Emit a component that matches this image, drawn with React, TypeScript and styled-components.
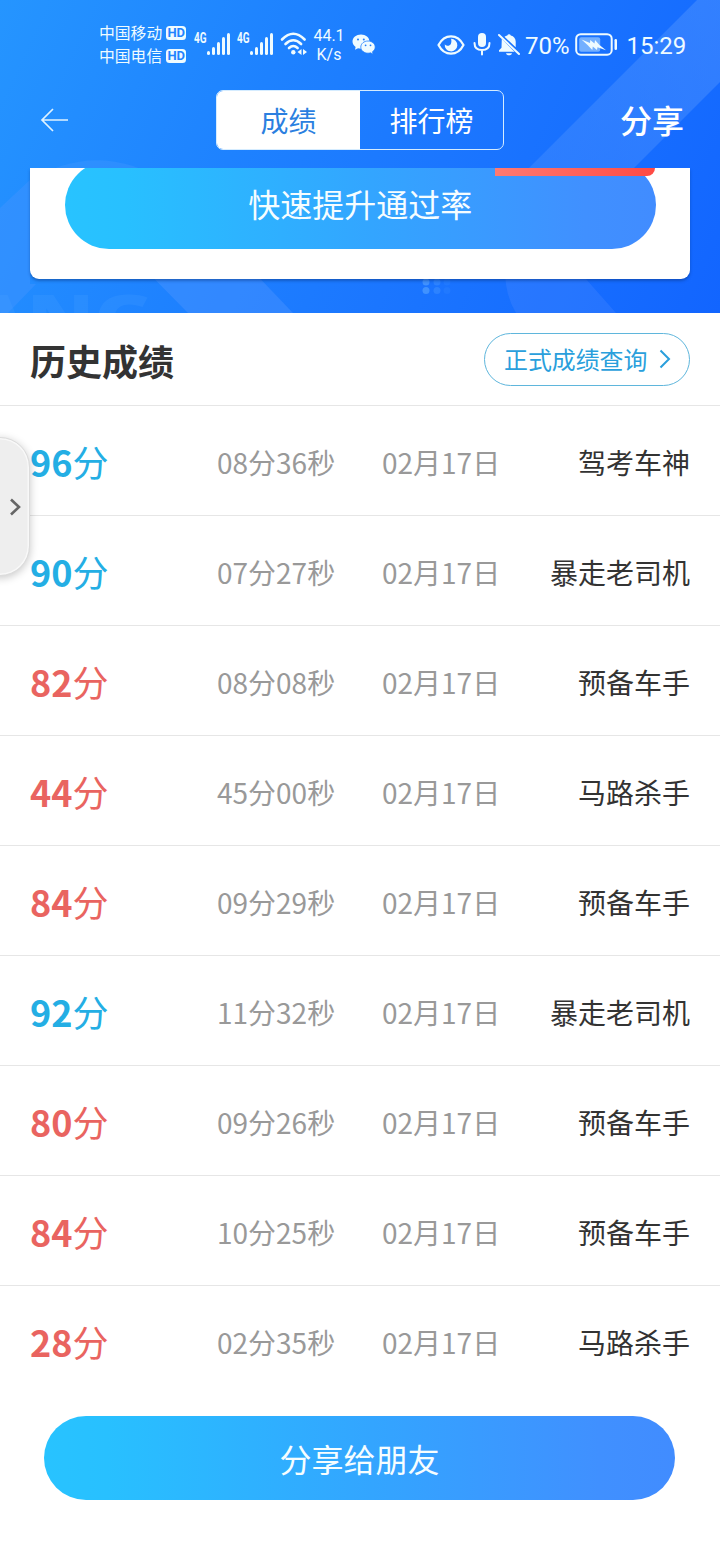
import React from "react";
import styled, { createGlobalStyle } from "styled-components";

const Global = createGlobalStyle`
  * { box-sizing: border-box; }
  body { margin: 0; background: #fff; font-family: "Noto Sans CJK SC", sans-serif; color: #333; }
  button { font: inherit; border: 0; padding: 0; background: none; }
`;

const ICE = "#effbff";

const Page = styled.main`
  position: relative;
  width: 720px;
  height: 1560px;
  overflow: hidden;
  background: #fff;
`;

const Hero = styled.header`
  position: relative;
  height: 313px;
  overflow: hidden;
  background: linear-gradient(115deg, #2595ff 0%, #1e82ff 35%, #1b76ff 60%, #1265ff 100%);
`;

const Backdrop = styled.svg`
  position: absolute;
  inset: 0;
`;

const HeroContent = styled.div`
  position: relative;
  display: flex;
  flex-direction: column;
`;

const StatusBar = styled.div`
  height: 80px;
  padding: 22px 30px 0 99px;
  display: flex;
  align-items: flex-start;
  color: ${ICE};
`;

const Carriers = styled.div`
  width: 88px;
  margin-top: -1px;
`;

const Carrier = styled.div`
  display: flex;
  align-items: center;
  gap: 4px;
  height: 23px;
  font-size: 15.8px;
  line-height: 22px;
  white-space: nowrap;
`;

const HdBadge = styled.span`
  flex: none;
  width: 20px;
  height: 14px;
  border-radius: 3.5px;
  background: ${ICE};
  color: #1f83ff;
  font: 700 13px/14px Roboto, sans-serif;
  text-align: center;
`;

const Glyph = styled.svg<{ $left: number; $top?: number }>`
  flex: none;
  margin-left: ${(p) => p.$left}px;
  margin-top: ${(p) => p.$top ?? 0}px;
`;

const Speed = styled.div`
  width: 32px;
  margin: 4px 0 0 5px;
  font: 400 16px/19px Roboto, sans-serif;
  text-align: center;
`;

const StatusText = styled.span<{ $left: number }>`
  margin: 10px 0 0 ${(p) => p.$left}px;
  font: 400 24px/29px Roboto, sans-serif;
  white-space: nowrap;
`;

const NavBar = styled.nav`
  height: 88px;
  padding: 10px 36px 0 40px;
  display: flex;
  align-items: flex-start;
`;

const BackButton = styled.button`
  width: 176px;
  height: 60px;
  display: flex;
  align-items: center;
`;

const Tabs = styled.div`
  width: 288px;
  height: 60px;
  display: flex;
  border: 1.5px solid #d5ecff;
  border-radius: 7px;
  overflow: hidden;
`;

const Tab = styled.button<{ $active?: boolean }>`
  flex: 1;
  font-size: 28px;
  line-height: 58px;
  color: ${(p) => (p.$active ? "#2b7fe0" : "#fff")};
  background: ${(p) => (p.$active ? "#fff" : "transparent")};
`;

const ShareLink = styled.button`
  width: 120px;
  height: 60px;
  margin-left: auto;
  text-align: right;
  font-size: 32px;
  font-weight: 500;
  line-height: 58px;
  padding-bottom: 2px;
  color: #fff;
`;

const CardWindow = styled.div`
  height: 145px;
  padding: 0 30px;
  overflow: hidden;
`;

const Card = styled.section`
  position: relative;
  height: 111px;
  padding: 0 34.5px 0 35px;
  background: #fff;
  border-radius: 0 0 9px 9px;
  box-shadow: 0 2px 3px rgba(10, 50, 120, 0.45);
`;

const CardClip = styled.div`
  height: 81px;
  display: flex;
  align-items: flex-end;
  overflow: hidden;
`;

const PillButton = styled.button<{ $height: number; $lift?: number }>`
  display: block;
  flex: none;
  width: 100%;
  height: ${(p) => p.$height}px;
  padding-bottom: ${(p) => (p.$lift ?? 0) * 2}px;
  border-radius: ${(p) => p.$height / 2}px;
  background: linear-gradient(90deg, #28c3ff 0%, #28c0ff 10%, #33a5ff 52%, #4090ff 88%, #418cff 100%);
  color: #f6fdff;
  font-size: 32px;
  line-height: ${(p) => p.$height - (p.$lift ?? 0) * 2}px;
`;

const Ribbon = styled.div`
  position: absolute;
  top: 0;
  right: 35px;
  width: 160px;
  height: 8px;
  border-radius: 0 0 9px 0;
  background: linear-gradient(90deg, #ff7a72, #ff4a44);
`;

const HistoryHeader = styled.div`
  height: 93px;
  padding: 0 30px;
  display: flex;
  align-items: center;
  justify-content: space-between;
  border-bottom: 1px solid #e6e6e6;
`;

const Title = styled.h2`
  margin: 1px 0 0;
  font-size: 36px;
  line-height: 52px;
  font-weight: 700;
`;

const QueryButton = styled.button`
  width: 206px;
  height: 53px;
  padding: 0 18px 1px 19px;
  display: flex;
  align-items: center;
  justify-content: space-between;
  border: 1px solid #5fb6dc;
  border-radius: 27px;
  color: #2a9fdc;
  font-size: 23.9px;
`;

const List = styled.ul`
  margin: 0;
  padding: 0;
  list-style: none;
`;

const Row = styled.li`
  height: 110px;
  padding: 0 30px 0 30px;
  display: grid;
  grid-template-columns: 187px 165px 1fr auto;
  align-items: center;
  border-bottom: 1px solid #e6e6e6;
  font-size: 28px;
  &:last-child { border-bottom-color: transparent; }
`;

const Score = styled.span<{ $pass: boolean }>`
  font-size: 36px;
  line-height: 50px;
  color: ${(p) => (p.$pass ? "#24aee4" : "#e96460")};
  b { font-weight: 700; }
`;

const Muted = styled.span`
  padding-top: 2px;
  color: #999;
`;

const Rank = styled.span`
  padding-top: 2px;
  color: #333;
`;

const Footer = styled.footer`
  padding: 20px 45px 0 44px;
`;

const SideHandle = styled.button`
  position: absolute;
  left: -30px;
  top: 437px;
  width: 60px;
  height: 139px;
  padding-left: 37.5px;
  display: flex;
  align-items: center;
  border: 1.5px solid #dcdcdc;
  border-radius: 30px;
  background: #eee;
  box-shadow: 0 2px 8px rgba(0, 0, 0, 0.22), inset 0 0 0 1.5px #f8f8f8;
`;

const results = [
  { score: 96, time: "08分36秒", rank: "驾考车神" },
  { score: 90, time: "07分27秒", rank: "暴走老司机" },
  { score: 82, time: "08分08秒", rank: "预备车手" },
  { score: 44, time: "45分00秒", rank: "马路杀手" },
  { score: 84, time: "09分29秒", rank: "预备车手" },
  { score: 92, time: "11分32秒", rank: "暴走老司机" },
  { score: 80, time: "09分26秒", rank: "预备车手" },
  { score: 84, time: "10分25秒", rank: "预备车手" },
  { score: 28, time: "02分35秒", rank: "马路杀手" },
];

const Signal = ({ left }: { left: number }) => (
  <Glyph $left={left} $top={9} width="37" height="26" viewBox="0 0 37 26" fill={ICE}>
    <text x="0" y="11.8" fontSize="14" fontWeight="700" fontFamily="Roboto" textLength="12.5" lengthAdjust="spacingAndGlyphs">4G</text>
    <rect x="13" y="20" width="3" height="4" rx="1.5" />
    <rect x="18" y="16" width="3" height="8" rx="1.5" />
    <rect x="23" y="11" width="3" height="13" rx="1.5" />
    <rect x="28" y="6" width="3" height="18" rx="1.5" />
    <rect x="33" y="2" width="3" height="22" rx="1.5" />
  </Glyph>
);

const Wifi = () => (
  <Glyph $left={6} $top={9} width="28" height="26" viewBox="0 0 28 26" fill="none" stroke={ICE} strokeWidth="2.6" strokeLinecap="round">
    <path d="M2 8.500Q13.300-3 24.600 8.500M5.500 13Q13.300 5.500 21.100 13M9 17Q13.300 13 17.600 17" />
    <circle cx="13.3" cy="21.3" r="2.2" fill={ICE} stroke="none" />
    <path d="M21.500 18v6l-4-3zM23 18v6l4-3z" fill={ICE} stroke="none" />
  </Glyph>
);

const WeChat = () => (
  <Glyph $left={7} $top={12} width="24" height="21" viewBox="0 0 24 21" fill={ICE}>
    <path d="M9 .5C4.200.5.500 3.600.500 7.600c0 2.200 1.200 4.100 3.100 5.400L3 15.800l3-1.500c1 .3 2 .4 3 .4 4.700 0 8.500-3.100 8.500-7.100S13.700.5 9 .5z" />
    <path d="M16 7c-4 0-7.200 2.700-7.200 6.100s3.200 6.100 7.200 6.100c.9 0 1.700-.1 2.500-.4l2.600 1.400-.6-2.500c1.700-1.100 2.700-2.800 2.700-4.600C23.200 9.700 20 7 16 7z" stroke="#1e7dff" strokeWidth=".8" />
    <g fill="#1e7dff"><circle cx="6" cy="5.500" r="1" /><circle cx="11.800" cy="5.500" r="1" /><circle cx="13.600" cy="11.300" r=".9" /><circle cx="18.500" cy="11.300" r=".9" /></g>
  </Glyph>
);

const Eye = () => (
  <Glyph $left={61} $top={12.5} width="28" height="20" viewBox="0 0 28 20" fill="none" stroke={ICE} strokeWidth="2.200">
    <path d="M1.500 10C7.500-1.600 20.500-1.600 26.500 10 20.500 21.600 7.500 21.600 1.500 10z" strokeLinejoin="round" />
    <path d="M14 3.800a6.300 6.300 0 1 1-6.200 5.400c1.600 2.200 5 1.800 6-.3.700-1.500.8-3.300.2-5.100z" fill={ICE} stroke="none" />
  </Glyph>
);

const Mic = () => (
  <Glyph $left={8} $top={10} width="18" height="24" viewBox="0 0 18 24" fill="none" stroke={ICE} strokeWidth="2" strokeLinecap="round">
    <rect x="5" y="1" width="8" height="14" rx="4" fill={ICE} stroke="none" />
    <path d="M1.500 11c0 4.500 3 7 7.500 7s7.500-2.500 7.500-7M9 18v4.500" />
  </Glyph>
);

const MutedBell = () => (
  <Glyph $left={6} $top={11} width="24" height="24" viewBox="0 0 24 24" fill={ICE}>
    <path d="M7.500 3.800C8.300 3 9.300 2.600 10.300 2.400a1.900 1.900 0 0 1 3.500 0c3 .7 4.900 3 4.900 6.100v5.800L7.500 3.800zM4.800 5.800 17.500 18.800H2v-1.500l2.500-2.500zM9 20.300h6c-.6 2.700-5.400 2.700-6 0z" />
    <path d="M2 2l20 19" stroke={ICE} strokeWidth="2" strokeLinecap="round" />
  </Glyph>
);

const Battery = () => (
  <Glyph $left={5} $top={11} width="43" height="23" viewBox="0 0 43 23" fill="none">
    <rect x="1.200" y="1.200" width="35.500" height="20.500" rx="4.500" stroke={ICE} strokeWidth="2" />
    <rect x="4.200" y="4.200" width="21" height="14.500" rx="2" fill="#74b0ff" />
    <path d="M6.500 6.500l8.500 3.500.3-3 4.200 3.500.5-3.500 4.500 5 6.500 5.200-8.500-3-.5 2.800-4.200-3.500-.5 3.500-4.500-4.800z" fill={ICE} />
    <rect x="39.500" y="6" width="2.500" height="11" rx="1.200" fill={ICE} />
  </Glyph>
);

export default function App() {
  return (
    <>
      <Global />
      <Page>
        <Hero>
          <Backdrop width="720" height="313" viewBox="0 0 720 313" aria-hidden="true">
            <defs>
              <linearGradient id="band" x1="1" y1="0" x2="0" y2="1">
                <stop offset="0" stopColor="#5a9bff" stopOpacity=".42" />
                <stop offset="1" stopColor="#5a9bff" stopOpacity=".28" />
              </linearGradient>
            </defs>
            <path d="M697 0H720V82L602 200H497z" fill="url(#band)" />
            <path d="M30 182A114 114 0 0 1 164 182z" fill="#4a9cff" opacity=".3" />
            <path d="M0 208L30 180V284H36L8 313H0z" fill="#4a96ff" opacity=".36" />
            <path d="M123 247H230L293 313H188z" fill="#5a9bff" opacity=".34" />
            <path d="M505 270Q505 295 516 313H616L578 270z" fill="#5a93ff" opacity=".24" />
            <text x="-32" y="341" fontFamily="Open Sans" fontWeight="800" fontSize="64" fill="#4ba2ff" opacity=".22" textLength="186" lengthAdjust="spacingAndGlyphs">ANG</text>
            <g fill="#5aa6ff" opacity=".6">
              <circle cx="426" cy="282" r="3.500" /><circle cx="437" cy="282" r="3.500" opacity=".5" /><circle cx="447" cy="282" r="3.500" opacity=".2" />
              <circle cx="426" cy="290.500" r="3.500" /><circle cx="437" cy="290.500" r="3.500" opacity=".5" /><circle cx="447" cy="290.500" r="3.500" opacity=".2" />
            </g>
          </Backdrop>
          <HeroContent>
            <StatusBar>
              <Carriers>
                <Carrier>中国移动<HdBadge>HD</HdBadge></Carrier>
                <Carrier>中国电信<HdBadge>HD</HdBadge></Carrier>
              </Carriers>
              <Signal left={6.5} />
              <Signal left={6.5} />
              <Wifi />
              <Speed>44.1<br />K/s</Speed>
              <WeChat />
              <Eye />
              <Mic />
              <MutedBell />
              <StatusText $left={4}>70%</StatusText>
              <Battery />
              <StatusText $left={9}>15:29</StatusText>
            </StatusBar>
            <NavBar>
              <BackButton aria-label="返回">
                <svg width="29" height="26" viewBox="0 0 29 26" fill="none" stroke="#dff2ff" strokeWidth="1.700">
                  <path d="M13 2L2 13l11 11M2 13h26" />
                </svg>
              </BackButton>
              <Tabs>
                <Tab $active>成绩</Tab>
                <Tab>排行榜</Tab>
              </Tabs>
              <ShareLink>分享</ShareLink>
            </NavBar>
            <CardWindow>
              <Card>
                <CardClip>
                  <PillButton $height={88} $lift={2}>快速提升通过率</PillButton>
                </CardClip>
                <Ribbon />
              </Card>
            </CardWindow>
          </HeroContent>
        </Hero>
        <HistoryHeader>
          <Title>历史成绩</Title>
          <QueryButton>
            正式成绩查询
            <svg width="12" height="20" viewBox="0 0 12 20" fill="none" stroke="#2a9fdc" strokeWidth="2">
              <path d="M1.500 1.500L10 10l-8.500 8.500" />
            </svg>
          </QueryButton>
        </HistoryHeader>
        <List>
          {results.map((r, i) => (
            <Row key={i}>
              <Score $pass={r.score >= 90}><b>{r.score}</b>分</Score>
              <Muted>{r.time}</Muted>
              <Muted>02月17日</Muted>
              <Rank>{r.rank}</Rank>
            </Row>
          ))}
        </List>
        <Footer>
          <PillButton $height={84}>分享给朋友</PillButton>
        </Footer>
        <SideHandle aria-label="展开">
          <svg width="13" height="18" viewBox="0 0 13 18" fill="none" stroke="#666" strokeWidth="2.600">
            <path d="M2 1.500L10 9l-8 7.500" />
          </svg>
        </SideHandle>
      </Page>
    </>
  );
}
